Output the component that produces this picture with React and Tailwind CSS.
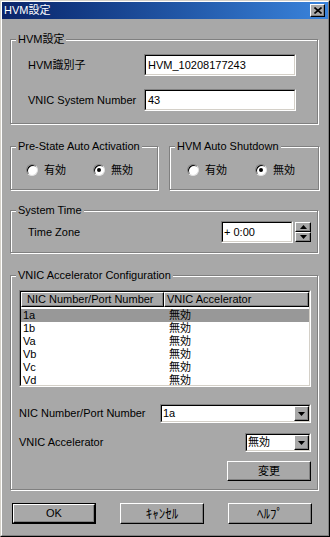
import React from "react";

const FONT = "font-['Liberation_Sans','Noto_Sans_CJK_JP',sans-serif]";

function Sunken({ className = "", children }) {
  return (
    <div className={`border border-t-[#808080] border-l-[#808080] border-b-white border-r-white ${className}`}>
      <div className="w-full h-full flex items-center border border-t-black border-l-black border-b-[#d4d0c8] border-r-[#d4d0c8] bg-white">
        {children}
      </div>
    </div>
  );
}

function Raised({ className = "", children }) {
  return (
    <div className={`flex items-center justify-center bg-[#a8a8a8] border border-t-white border-l-white border-b-black border-r-black shadow-[inset_-1px_-1px_0_#808080] ${className}`}>
      {children}
    </div>
  );
}

function Button({ children, isDefault, className = "" }) {
  if (isDefault) {
    return (
      <div className="w-[84px] h-[21px] border border-black">
        <Raised className={`w-full h-full ${className}`}>{children}</Raised>
      </div>
    );
  }
  return <Raised className={`w-[84px] h-[21px] ${className}`}>{children}</Raised>;
}

function Arrow({ up }) {
  return (
    <svg width="7" height="4" viewBox="0 0 7 4">
      {up ? <path d="M3.5 0 L7 4 L0 4 Z" fill="#000" /> : <path d="M0 0 L7 0 L3.5 4 Z" fill="#000" />}
    </svg>
  );
}

function Combo({ value, className = "" }) {
  return (
    <Sunken className={className}>
      <span className="flex-1 pl-[1px] leading-none">{value}</span>
      <Raised className="w-[15px] h-full">
        <Arrow />
      </Raised>
    </Sunken>
  );
}

function Radio({ checked, label }) {
  return (
    <div className="flex items-center gap-[6px]">
      <div className="w-[12px] h-[12px] rounded-full bg-white border border-t-[#808080] border-l-[#808080] border-b-[#e0e0e0] border-r-[#e0e0e0] shadow-[inset_1px_1px_0_#000] flex items-center justify-center">
        {checked && <div className="w-[4px] h-[4px] rounded-full bg-black" />}
      </div>
      <span>{label}</span>
    </div>
  );
}

function Group({ title, className = "", children }) {
  return (
    <div className={`relative border border-[#808080] shadow-[inset_1px_1px_0_#fff,1px_1px_0_#fff] ${className}`}>
      <span className="absolute -top-[8px] left-[5px] px-[2px] bg-[#a8a8a8] leading-[14px]">{title}</span>
      {children}
    </div>
  );
}

const rows = ["1a", "1b", "Va", "Vb", "Vc", "Vd"];

export default function App() {
  return (
    <div className={`w-[330px] h-[537px] bg-[#a8a8a8] text-[11px] text-black ${FONT} border border-t-[#d4d0c8] border-l-[#d4d0c8] border-b-black border-r-black`}>
      <div className="h-full border border-t-white border-l-white border-b-[#808080] border-r-[#808080]">

        {/* title bar */}
        <div className="h-[17px] flex items-center bg-gradient-to-r from-[#0a246a] to-[#3a84dc] pl-[2px] pr-[3px]">
          <span className="flex-1 text-white text-[11px] leading-none">HVM設定</span>
          <Raised className="w-[15px] h-[13px]">
            <svg width="8" height="7" viewBox="0 0 8 7">
              <path d="M0.5 0.5 L7.5 6.5 M7.5 0.5 L0.5 6.5" stroke="#000" strokeWidth="1.6" />
            </svg>
          </Raised>
        </div>

        <div className="pl-[8px] pt-[20px] flex flex-col">

          {/* HVM settings */}
          <Group title="HVM設定" className="w-[308px] h-[85px]">
            <div className="pt-[14px] pl-[17px] flex flex-col gap-[13px]">
              <div className="flex items-center">
                <span className="w-[116px]">HVM識別子</span>
                <Sunken className="w-[152px] h-[22px]">
                  <span className="pl-[2px]">HVM_10208177243</span>
                </Sunken>
              </div>
              <div className="flex items-center">
                <span className="w-[116px]">VNIC System Number</span>
                <Sunken className="w-[152px] h-[22px]">
                  <span className="pl-[2px]">43</span>
                </Sunken>
              </div>
            </div>
          </Group>

          {/* auto activation / shutdown */}
          <div className="mt-[22px] flex gap-[11px]">
            <Group title="Pre-State Auto Activation" className="w-[148px] h-[44px]">
              <div className="pt-[15px] pl-[15px] flex gap-[27px]">
                <Radio label="有効" />
                <Radio label="無効" checked />
              </div>
            </Group>
            <Group title="HVM Auto Shutdown" className="w-[150px] h-[44px]">
              <div className="pt-[15px] pl-[17px] flex gap-[28px]">
                <Radio label="有効" />
                <Radio label="無効" checked />
              </div>
            </Group>
          </div>

          {/* system time */}
          <Group title="System Time" className="mt-[20px] w-[308px] h-[43px]">
            <div className="pt-[10px] pl-[17px] pr-[6px] flex items-center">
              <span className="flex-1">Time Zone</span>
              <Sunken className="w-[72px] h-[22px]">
                <span className="pl-[1px]">+ 0:00</span>
              </Sunken>
              <div className="ml-[2px] flex flex-col">
                <Raised className="w-[16px] h-[10px]"><Arrow up /></Raised>
                <Raised className="w-[16px] h-[10px]"><Arrow /></Raised>
              </div>
            </div>
          </Group>

          {/* VNIC accelerator */}
          <Group title="VNIC Accelerator Configuration" className="mt-[22px] w-[308px] h-[215px]">
            <div className="pt-[14px] pl-[8px] pr-[6px] flex flex-col">
              <div className="h-[97px] border border-t-[#808080] border-l-[#808080] border-b-white border-r-white">
                <div className="h-full border border-t-black border-l-black border-b-[#d4d0c8] border-r-[#d4d0c8] bg-white flex flex-col">
                  <div className="flex bg-[#a8a8a8]">
                    <Raised className="w-[143px] h-[15px] !justify-start pl-[5px]">NIC Number/Port Number</Raised>
                    <Raised className="w-[145px] h-[15px] !justify-start pl-[2px]">VNIC Accelerator</Raised>
                  </div>
                  <div className="pt-[2px] flex flex-col">
                    {rows.map((r, i) => (
                      <div key={r} className={`flex h-[13px] items-center ${i === 0 ? "bg-[#989898]" : ""}`}>
                        <span className="w-[148px] pl-[2px]">{r}</span>
                        <span>無効</span>
                      </div>
                    ))}
                  </div>
                </div>
              </div>

              <div className="mt-[17px] flex items-center">
                <span className="flex-1">NIC Number/Port Number</span>
                <Combo value="1a" className="w-[151px] h-[19px]" />
              </div>
              <div className="mt-[10px] flex items-center">
                <span className="flex-1">VNIC Accelerator</span>
                <Combo value="無効" className="w-[66px] h-[19px]" />
              </div>
              <div className="mt-[9px] flex justify-end">
                <Raised className="w-[84px] h-[20px]">変更</Raised>
              </div>
            </div>
          </Group>

          {/* dialog buttons */}
          <div className="mt-[13px] ml-[2px] flex gap-[24px]">
            <Button isDefault>OK</Button>
            <Button className="text-[13px]">ｷｬﾝｾﾙ</Button>
            <Button className="text-[13px]">ﾍﾙﾌﾟ</Button>
          </div>
        </div>
      </div>
    </div>
  );
}
